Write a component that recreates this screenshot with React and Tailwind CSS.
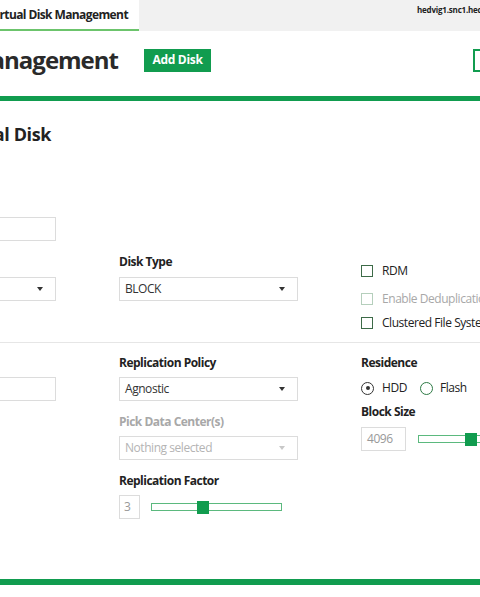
import React from "react";

function Caret({ light }) {
  return (
    <span
      className={`absolute right-[12px] top-1/2 -translate-y-1/2 w-0 h-0 border-l-[3.5px] border-r-[3.5px] border-t-[4px] border-l-transparent border-r-transparent ${
        light ? "border-t-[#c8c8c8]" : "border-t-[#333]"
      }`}
    />
  );
}

function Select({ value, disabled, className = "" }) {
  return (
    <div
      className={`relative h-[24px] border border-[#dcdcdc] flex items-center pl-[5px] text-[12px] tracking-[-0.45px] ${
        disabled ? "text-[#b4b4b4] bg-white" : "text-[#333]"
      } ${className}`}
    >
      {value}
      <Caret light={disabled} />
    </div>
  );
}

function Label({ children, muted, className = "" }) {
  return (
    <div
      className={`text-[12px] font-bold leading-[16px] tracking-[-0.5px] whitespace-nowrap ${
        muted ? "text-[#a8a8a8]" : "text-[#222]"
      } ${className}`}
    >
      {children}
    </div>
  );
}

function Check({ label, disabled, className = "" }) {
  return (
    <div className={`flex items-center gap-[9px] h-[14px] ${className}`}>
      <span
        className={`w-[12px] h-[12px] shrink-0 border-[1.5px] ${
          disabled ? "border-[#b5cfbc]" : "border-[#3d6b48]"
        }`}
      />
      <span
        className={`text-[12px] tracking-[-0.45px] whitespace-nowrap ${
          disabled ? "text-[#a8a8a8]" : "text-[#222]"
        }`}
      >
        {label}
      </span>
    </div>
  );
}

function Slider({ width, pos }) {
  return (
    <div className="relative h-[13px] flex items-center shrink-0" style={{ width }}>
      <div className="w-full h-[8px] border border-[#5bb97e] bg-white" />
      <div
        className="absolute top-0 w-[12px] h-[13px] bg-[#119c4f]"
        style={{ left: pos }}
      />
    </div>
  );
}

export default function App() {
  return (
    <div className="w-[480px] h-[597px] overflow-hidden bg-white font-['Open_Sans',sans-serif] text-[#222]">
      {/* top tabs */}
      <div className="h-[31px] bg-[#f1f1f1] flex">
        <div className="w-[139px] shrink-0 bg-white border-b-2 border-[#6cc46c] flex items-center justify-end pr-[11px] whitespace-nowrap">
          <span className="text-[12px] font-bold tracking-[-0.6px] text-[#222]">
            Virtual Disk Management
          </span>
        </div>
        <div className="ml-[278px] mt-[4px] text-[8px] font-bold tracking-[-0.2px] text-[#222] whitespace-nowrap">
          hedvig1.snc1.hedvig.io
        </div>
      </div>

      {/* page header */}
      <div className="h-[58px] mb-[7px] flex items-center">
        <div className="w-[118px] shrink-0 flex justify-end whitespace-nowrap">
          <span className="text-[24px] font-bold tracking-[-1px] text-[#2a2a2a] leading-[30px]">
            Virtual Disk Management
          </span>
        </div>
        <button className="ml-[26px] shrink-0 h-[23px] w-[67px] bg-[#119c4f] text-white text-[12px] font-bold tracking-[-0.3px]">
          Add Disk
        </button>
        <div className="ml-[262px] shrink-0 w-[30px] h-[23px] border-2 border-[#119c4f]" />
      </div>
      <div className="h-[5px] bg-[#119c4f]" />

      {/* form */}
      <div className="w-[51px] flex justify-end whitespace-nowrap mt-[21px]">
        <span className="text-[18px] font-bold tracking-[-0.4px] leading-[24px] text-[#222]">
          Create Virtual Disk
        </span>
      </div>

      <div className="-ml-[124px] w-[640px]">
        <div className="mt-[71px] w-[180px] h-[24px] border border-[#dcdcdc]" />

        <div className="flex gap-[63px] mt-[13px]">
          <div className="w-[180px] shrink-0">
            <Label className="mb-[7px]">Disk Size</Label>
            <Select value="GB" />
          </div>
          <div className="w-[179px] shrink-0">
            <Label className="mb-[7px]">Disk Type</Label>
            <Select value="BLOCK" />
          </div>
          <div className="pt-[10px]">
            <Check label="RDM" />
            <Check label="Enable Deduplication" disabled className="mt-[14px]" />
            <Check label="Clustered File System" className="mt-[10px]" />
          </div>
        </div>

        <div className="mt-[12px] border-t border-[#e6e6e6]" />

        <div className="flex gap-[63px] mt-[12px] pb-[60px]">
          <div className="w-[180px] shrink-0">
            <Label className="mb-[6px]">Description</Label>
            <div className="h-[24px] border border-[#dcdcdc]" />
          </div>
          <div className="w-[179px] shrink-0">
            <Label className="mb-[6px]">Replication Policy</Label>
            <Select value="Agnostic" />
            <Label muted className="mt-[13px] mb-[6px]">
              Pick Data Center(s)
            </Label>
            <Select value="Nothing selected" disabled />
            <Label className="mt-[13px] mb-[6px]">Replication Factor</Label>
            <div className="flex items-center gap-[11px]">
              <div className="w-[21px] h-[24px] border border-[#dcdcdc] flex items-center pl-[4px] text-[12px] text-[#999]">
                3
              </div>
              <Slider width={131} pos={46} />
            </div>
          </div>
          <div>
            <Label className="mb-[9px]">Residence</Label>
            <div className="flex items-center h-[16px] mb-[8px]">
              <span className="w-[13px] h-[13px] rounded-full border-[1.5px] border-[#333] flex items-center justify-center">
                <span className="w-[4px] h-[4px] rounded-full bg-[#333]" />
              </span>
              <span className="ml-[8px] text-[12px] tracking-[-0.45px] text-[#222]">HDD</span>
              <span className="ml-[13px] w-[13px] h-[13px] rounded-full border-[1.5px] border-[#2d7a45]" />
              <span className="ml-[7px] text-[12px] tracking-[-0.45px] text-[#222]">Flash</span>
            </div>
            <Label className="mb-[7px]">Block Size</Label>
            <div className="flex items-center gap-[12px]">
              <div className="w-[45px] h-[24px] border border-[#dcdcdc] flex items-center pl-[5px] text-[12px] tracking-[-0.45px] text-[#999]">
                4096
              </div>
              <Slider width={131} pos={47} />
            </div>
          </div>
        </div>
      </div>

      <div className="h-[6px] bg-[#119c4f]" />
    </div>
  );
}
